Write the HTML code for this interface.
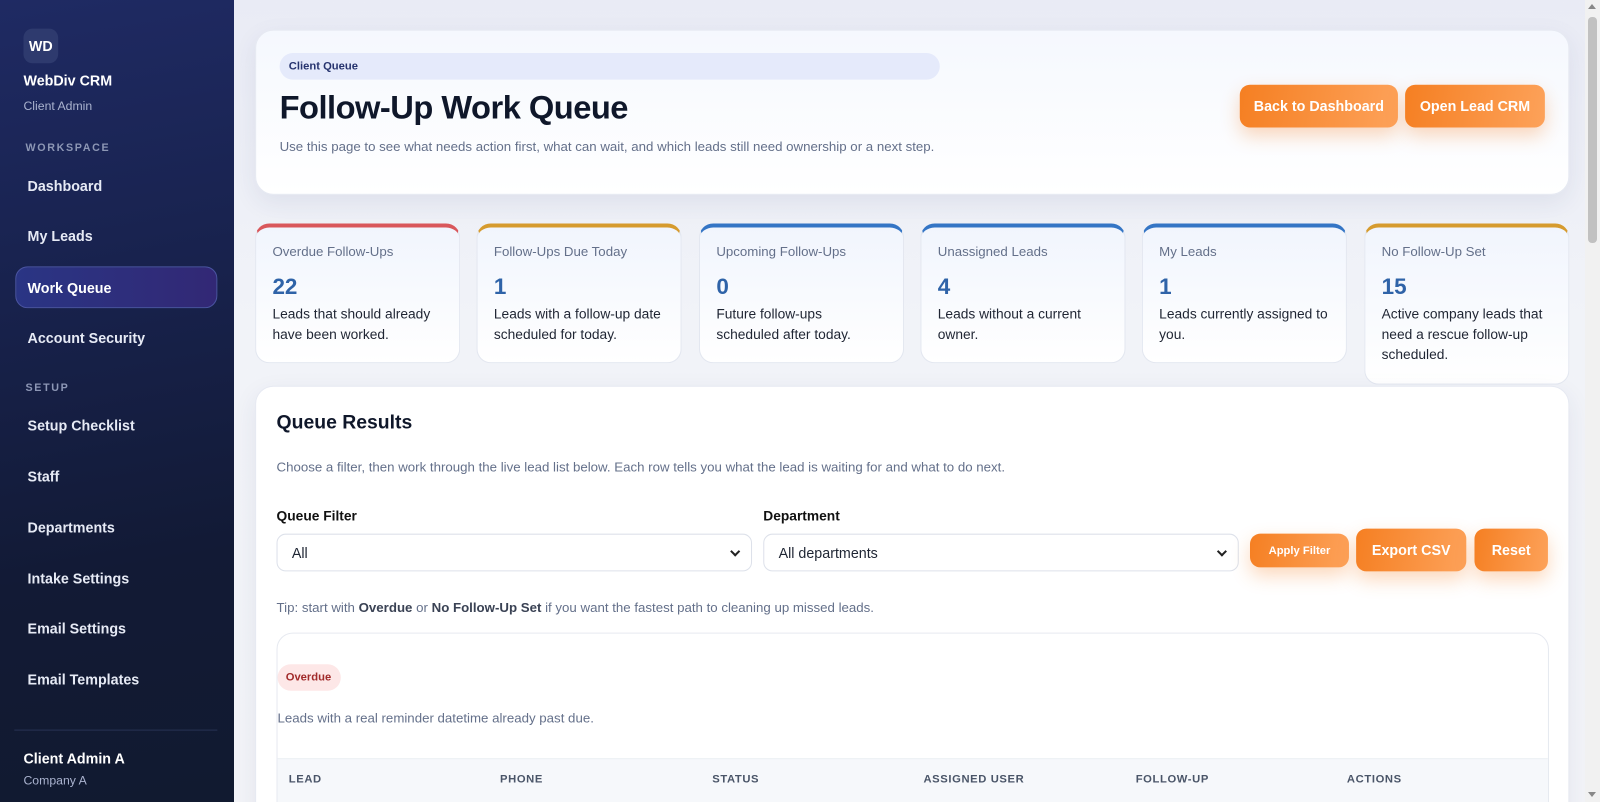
<!DOCTYPE html>
<html><head><meta charset="utf-8"><style>
*{box-sizing:border-box;margin:0;padding:0}
html,body{width:1600px;height:802px;overflow:hidden}
body{font-family:"Liberation Sans",sans-serif;background:linear-gradient(180deg,#e9ebf5 0%,#f1f3f8 40%,#f3f4f8 100%);position:relative}
#w{position:absolute;left:0;top:0;width:1568px;height:786px;transform:scale(1.0204);transform-origin:0 0}
.sb{position:absolute;left:0;top:0;width:229px;height:786px;background:linear-gradient(170deg,#1f2a63 0%,#18224d 35%,#121a35 70%,#111a30 100%);color:#e5e9f5}
.sb .logo{position:absolute;left:23px;top:28px;width:34px;height:34px;border-radius:9px;background:#2e3a6e;color:#fff;font-weight:700;font-size:14px;display:flex;align-items:center;justify-content:center}
.sb .t{position:absolute;left:23px;font-size:14px;font-weight:700;color:#fff}
.sb .s{position:absolute;left:23px;font-size:12px;color:#aab3cf}
.sb .h{position:absolute;left:25px;font-size:10.5px;letter-spacing:1.6px;font-weight:700;color:#8d97b5}
.sb .n{position:absolute;left:27px;font-size:14px;font-weight:700;color:#e6eaf5}
.sb .act{position:absolute;left:15px;top:261px;width:198px;height:41px;border-radius:12px;background:linear-gradient(90deg,#2a3584,#322875);border:1px solid #4a54a0}
.card{position:absolute;background:linear-gradient(180deg,#f5f8fe,#ffffff);border-radius:18px;box-shadow:0 8px 24px rgba(40,50,100,.08);border:1px solid #e6e9f2}
.btn{position:absolute;border-radius:10px;background:linear-gradient(100deg,#f57f22,#fda25a);color:#fff;font-weight:700;display:flex;align-items:center;justify-content:center;box-shadow:0 8px 18px rgba(245,127,34,.3)}
.stat{position:absolute;top:219px;width:201px;height:137px;border-radius:14px;background:linear-gradient(180deg,#f1f5fd,#fff);border:1px solid #e3e7f0;border-top:4px solid;padding:16px}
.stat .l{font-size:13px;color:#64708a}
.stat .v{font-size:22px;font-weight:700;color:#2f63a8;margin-top:14px}
.stat .d{font-size:13.5px;color:#1f2533;line-height:20px;margin-top:4px}
.sel{position:absolute;height:37px;border:1px solid #dde1ea;border-radius:9px;background:#fff;font-size:14px;color:#1e2533;padding:10px 14px}
.sel:after{content:"";position:absolute;right:12px;top:13px;width:5px;height:5px;border-right:2px solid #222;border-bottom:2px solid #222;transform:rotate(45deg)}
.th{position:absolute;top:758px;font-size:11px;font-weight:700;letter-spacing:.6px;color:#4a5568}
</style></head><body>
<div style="position:absolute;left:0;top:0;width:234px;height:802px;background:linear-gradient(170deg,#1f2a63 0%,#18224d 35%,#121a35 70%,#111a30 100%)"></div>
<div id="w">
<div class="sb">
<div class="logo">WD</div>
<div class="t" style="top:71px">WebDiv CRM</div>
<div class="s" style="top:97px">Client Admin</div>
<div class="h" style="top:139px">WORKSPACE</div>
<div class="n" style="top:174px">Dashboard</div>
<div class="n" style="top:223px">My Leads</div>
<div class="act"></div>
<div class="n" style="top:274px;color:#fff">Work Queue</div>
<div class="n" style="top:323px">Account Security</div>
<div class="h" style="top:374px">SETUP</div>
<div class="n" style="top:409px">Setup Checklist</div>
<div class="n" style="top:459px">Staff</div>
<div class="n" style="top:509px">Departments</div>
<div class="n" style="top:559px">Intake Settings</div>
<div class="n" style="top:608px">Email Settings</div>
<div class="n" style="top:658px">Email Templates</div>
<div style="position:absolute;left:14px;top:715px;width:199px;height:1px;background:#283253"></div>
<div class="t" style="top:735px">Client Admin A</div>
<div class="s" style="top:758px">Company A</div>
</div>

<div class="card" style="left:250px;top:29px;width:1288px;height:162px"></div>
<div style="position:absolute;left:274px;top:52px;width:647px;height:26px;border-radius:13px;background:#e5eafb;color:#27346f;font-size:11px;font-weight:700;padding:7px 9px">Client Queue</div>
<div style="position:absolute;left:274px;top:87px;font-size:32px;font-weight:700;color:#0f172a;letter-spacing:-.5px">Follow-Up Work Queue</div>
<div style="position:absolute;left:274px;top:136px;font-size:13px;color:#64708a">Use this page to see what needs action first, what can wait, and which leads still need ownership or a next step.</div>
<div class="btn" style="left:1215px;top:83px;width:155px;height:42px;font-size:14px">Back to Dashboard</div>
<div class="btn" style="left:1377px;top:83px;width:137px;height:42px;font-size:14px">Open Lead CRM</div>

<div class="stat" style="left:250px;border-top-color:#d9575b"><div class="l">Overdue Follow-Ups</div><div class="v">22</div><div class="d">Leads that should already have been worked.</div></div>
<div class="stat" style="left:467px;border-top-color:#d69b2e"><div class="l">Follow-Ups Due Today</div><div class="v">1</div><div class="d">Leads with a follow-up date scheduled for today.</div></div>
<div class="stat" style="left:685px;border-top-color:#3475c5"><div class="l">Upcoming Follow-Ups</div><div class="v">0</div><div class="d">Future follow-ups scheduled after today.</div></div>
<div class="stat" style="left:902px;border-top-color:#3475c5"><div class="l">Unassigned Leads</div><div class="v">4</div><div class="d">Leads without a current owner.</div></div>
<div class="stat" style="left:1119px;border-top-color:#3475c5"><div class="l">My Leads</div><div class="v">1</div><div class="d">Leads currently assigned to you.</div></div>
<div class="stat" style="left:1337px;height:158px;border-top-color:#d69b2e"><div class="l">No Follow-Up Set</div><div class="v">15</div><div class="d">Active company leads that need a rescue follow-up scheduled.</div></div>

<div class="card" style="left:250px;top:378px;width:1288px;height:440px;background:#fff"></div>
<div style="position:absolute;left:271px;top:404px;font-size:19px;font-weight:700;color:#0f172a">Queue Results</div>
<div style="position:absolute;left:271px;top:450px;font-size:13px;color:#64708a">Choose a filter, then work through the live lead list below. Each row tells you what the lead is waiting for and what to do next.</div>
<div style="position:absolute;left:271px;top:498px;font-size:13.5px;font-weight:700;color:#111">Queue Filter</div>
<div style="position:absolute;left:748px;top:498px;font-size:13.5px;font-weight:700;color:#111">Department</div>
<div class="sel" style="left:271px;top:523px;width:466px">All</div>
<div class="sel" style="left:748px;top:523px;width:466px">All departments</div>
<div class="btn" style="left:1225px;top:523px;width:97px;height:33px;font-size:11px">Apply Filter</div>
<div class="btn" style="left:1329px;top:518px;width:108px;height:42px;font-size:14px">Export CSV</div>
<div class="btn" style="left:1445px;top:518px;width:72px;height:42px;font-size:14px">Reset</div>
<div style="position:absolute;left:271px;top:588px;font-size:13px;color:#64708a">Tip: start with <b style="color:#3a4254">Overdue</b> or <b style="color:#3a4254">No Follow-Up Set</b> if you want the fastest path to cleaning up missed leads.</div>
<div style="position:absolute;left:271px;top:620px;width:1247px;height:200px;border:1px solid #e6e9f0;border-radius:16px;background:#fff;overflow:hidden">
<div style="position:absolute;left:0;top:122px;width:100%;height:80px;background:#f6f8fb;border-top:1px solid #edf0f4"></div>
</div>
<div style="position:absolute;left:272px;top:651px;width:62px;height:26px;border-radius:13px;background:#fde7e7;color:#a12a2a;font-size:11px;font-weight:700;padding:7px 8px">Overdue</div>
<div style="position:absolute;left:272px;top:696px;font-size:13px;color:#64708a">Leads with a real reminder datetime already past due.</div>
<div class="th" style="left:283px">LEAD</div>
<div class="th" style="left:490px">PHONE</div>
<div class="th" style="left:698px">STATUS</div>
<div class="th" style="left:905px">ASSIGNED USER</div>
<div class="th" style="left:1113px">FOLLOW-UP</div>
<div class="th" style="left:1320px">ACTIONS</div>
</div>
<div style="position:absolute;left:1585px;top:0;width:15px;height:802px;background:#f1f1f1"></div>
<div style="position:absolute;left:1588px;top:17px;width:9px;height:226px;background:#c1c1c1;border-radius:4px"></div>
<div style="position:absolute;left:1588px;top:4px;border:4px solid transparent;border-bottom:5px solid #888;border-top:0"></div>
<div style="position:absolute;left:1588px;top:792px;border:4px solid transparent;border-top:5px solid #888;border-bottom:0"></div>
</body></html>
